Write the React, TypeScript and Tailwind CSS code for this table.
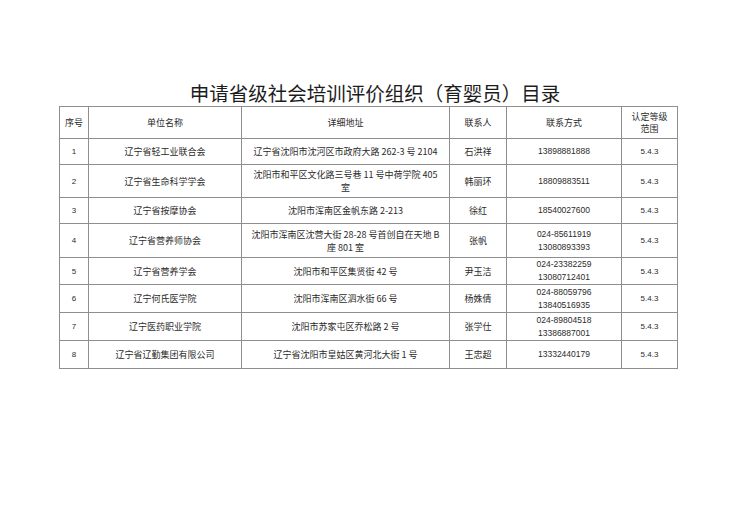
const rows = [
  { no: '1', name: '辽宁省轻工业联合会', addr: ['辽宁省沈阳市沈河区市政府大路 262-3 号 2104'], person: '石洪祥', phone: ['13898881888'], h: 'h-[26px]' },
  { no: '2', name: '辽宁省生命科学学会', addr: ['沈阳市和平区文化路三号巷 11 号中荷学院 405', '室'], person: '韩丽环', phone: ['18809883511'], h: 'h-[33px]' },
  { no: '3', name: '辽宁省按摩协会', addr: ['沈阳市浑南区金帆东路 2-213'], person: '徐红', phone: ['18540027600'], h: 'h-[26px]' },
  { no: '4', name: '辽宁省营养师协会', addr: ['沈阳市浑南区沈营大街 28-28 号首创自在天地 B', '座 801 室'], person: '张帆', phone: ['024-85611919', '13080893393'], h: 'h-[34px]' },
  { no: '5', name: '辽宁省营养学会', addr: ['沈阳市和平区集贤街 42 号'], person: '尹玉洁', phone: ['024-23382259', '13080712401'], h: 'h-[26px]' },
  { no: '6', name: '辽宁何氏医学院', addr: ['沈阳市浑南区泗水街 66 号'], person: '杨姝倩', phone: ['024-88059796', '13840516935'], h: 'h-[28px]' },
  { no: '7', name: '辽宁医药职业学院', addr: ['沈阳市苏家屯区乔松路 2 号'], person: '张学仕', phone: ['024-89804518', '13386887001'], h: 'h-[28px]' },
  { no: '8', name: '辽宁省辽勤集团有限公司', addr: ['辽宁省沈阳市皇姑区黄河北大街 1 号'], person: '王忠超', phone: ['13332440179'], h: 'h-[28px]' },
];

const cell = 'border border-[#8e8e8e] p-0 text-center align-middle';

export default function App() {
  return (
    <div className="h-[530px] w-[750px] bg-white font-['Noto_Sans_CJK_SC',sans-serif] text-[#2b2b2b]">
      <h1 className="pt-[82px] text-center text-[19.5px] leading-[21px] font-normal text-[#1c1c1c]">
        申请省级社会培训评价组织（育婴员）目录
      </h1>
      <table className="mt-[3px] ml-[59px] w-[618px] table-fixed border-collapse text-[9px] leading-[13px]">
        <colgroup>
          <col className="w-[29px]" />
          <col className="w-[153px]" />
          <col className="w-[208px]" />
          <col className="w-[57px]" />
          <col className="w-[115px]" />
          <col className="w-[56px]" />
        </colgroup>
        <thead>
          <tr className="h-[32px]">
            <th className={`${cell} font-normal`}>序号</th>
            <th className={`${cell} font-normal`}>单位名称</th>
            <th className={`${cell} font-normal`}>详细地址</th>
            <th className={`${cell} font-normal`}>联系人</th>
            <th className={`${cell} font-normal`}>联系方式</th>
            <th className={`${cell} font-normal leading-[12px]`}>
              认定等级
              <br />
              范围
            </th>
          </tr>
        </thead>
        <tbody>
          {rows.map((r) => (
            <tr key={r.no} className={r.h}>
              <td className={`${cell} font-['Liberation_Sans',sans-serif] text-[8px]`}>{r.no}</td>
              <td className={cell}>{r.name}</td>
              <td className={`${cell} whitespace-nowrap`}>
                {r.addr.map((line, i) => (
                  <div key={i}>{line}</div>
                ))}
              </td>
              <td className={cell}>{r.person}</td>
              <td className={`${cell} font-['Liberation_Sans',sans-serif] text-[8.5px]`}>
                {r.phone.map((p) => (
                  <div key={p}>{p}</div>
                ))}
              </td>
              <td className={`${cell} font-['Liberation_Sans',sans-serif] text-[8px]`}>5.4.3</td>
            </tr>
          ))}
        </tbody>
      </table>
    </div>
  );
}
